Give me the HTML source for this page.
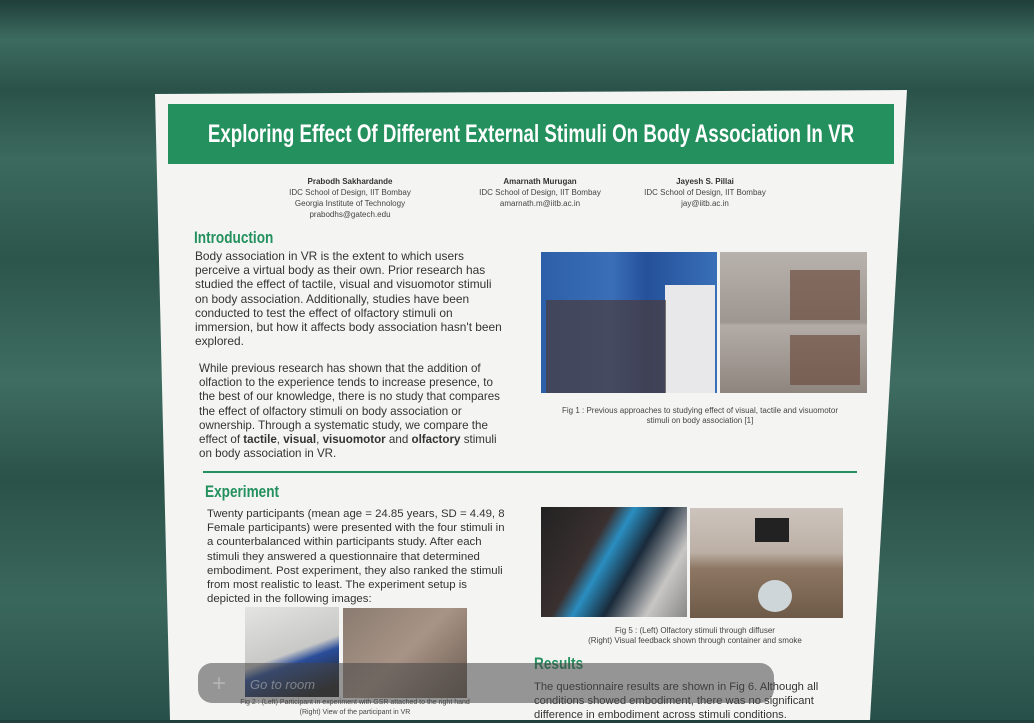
<!DOCTYPE html>
<html><head><style>
*{margin:0;padding:0;box-sizing:border-box}
body{width:1034px;height:720px;overflow:hidden;position:relative;font-family:"Liberation Sans",sans-serif;
background:linear-gradient(180deg,#1f3f3a 0px,#3d6b60 40px,#2a5249 90px,#3c6a5f 160px,#2c554b 260px,#3f6d62 380px,#2b5249 480px,#3a675c 600px,#28504a 720px);}
.poster{position:absolute;left:0;top:0;width:1034px;height:720px;background:#f4f5f3;
clip-path:polygon(155px 94px,907px 90px,870px 720px,170px 720px);}
.abs{position:absolute}
.title{left:168px;top:104px;width:726px;height:60px;background:#23905e;color:#fff;font-weight:bold;font-size:25px;line-height:60px;white-space:nowrap}
.title span{position:absolute;left:50%;top:0;transform:translateX(-50%) scaleX(0.75);transform-origin:center}
.auth{font-size:8px;color:#444;text-align:center;line-height:11px}
.auth b{color:#333}
h2{position:absolute;color:#23905e;font-size:17px;font-weight:bold;transform:scaleX(0.8);transform-origin:left}
.txt{position:absolute;font-size:11.2px;line-height:14.2px;color:#333}
.cap{position:absolute;font-size:8px;color:#444;text-align:center;line-height:10px}
.img{position:absolute}
</style></head><body>
<div class="poster">
<div class="abs title"><span>Exploring Effect Of Different External Stimuli On Body Association In VR</span></div>
<div class="abs auth" style="left:270px;top:176px;width:160px"><b>Prabodh Sakhardande</b><br>IDC School of Design, IIT Bombay<br>Georgia Institute of Technology<br>prabodhs@gatech.edu</div>
<div class="abs auth" style="left:440px;top:176px;width:200px"><b>Amarnath Murugan</b><br>IDC School of Design, IIT Bombay<br>amarnath.m@iitb.ac.in</div>
<div class="abs auth" style="left:625px;top:176px;width:160px"><b>Jayesh S. Pillai</b><br>IDC School of Design, IIT Bombay<br>jay@iitb.ac.in</div>
<h2 style="left:194px;top:228px">Introduction</h2>
<div class="txt" style="left:195px;top:249px;width:310px;font-size:11.9px">Body association in VR is the extent to which users perceive a virtual body as their own. Prior research has studied the effect of tactile, visual and visuomotor stimuli on body association. Additionally, studies have been conducted to test the effect of olfactory stimuli on immersion, but how it affects body association hasn't been explored.</div>
<div class="txt" style="left:199px;top:362px;width:308px;font-size:11.6px">While previous research has shown that the addition of olfaction to the experience tends to increase presence, to the best of our knowledge, there is no study that compares the effect of olfactory stimuli on body association or ownership. Through a systematic study, we compare the effect of <b>tactile</b>, <b>visual</b>, <b>visuomotor</b> and <b>olfactory</b> stimuli on body association in VR.</div>
<div class="img" style="left:541px;top:252px;width:176px;height:141px;background:linear-gradient(90deg,#2c5fa8 0,#3a6fb8 40%,#25509a 60%,#3870b8 100%)"></div>
<div class="img" style="left:665px;top:285px;width:50px;height:108px;background:#e8e8ea"></div>
<div class="img" style="left:546px;top:300px;width:120px;height:93px;background:#4a3a3a;opacity:.7"></div>
<div class="img" style="left:720px;top:252px;width:147px;height:141px;background:linear-gradient(180deg,#b8b2ad,#9e9690 50%,#b3aca6 52%,#8e857e)"></div>
<div class="img" style="left:790px;top:270px;width:70px;height:50px;background:#6e4e42;opacity:.7"></div>
<div class="img" style="left:790px;top:335px;width:70px;height:50px;background:#6e4e42;opacity:.7"></div>
<div class="cap" style="left:550px;top:406px;width:300px">Fig 1 : Previous approaches to studying effect of visual, tactile and visuomotor stimuli on body association [1]</div>
<div class="abs" style="left:203px;top:471px;width:654px;height:2px;background:#23905e"></div>
<h2 style="left:205px;top:482px">Experiment</h2>
<div class="txt" style="left:207px;top:507px;width:300px;font-size:11.4px">Twenty participants (mean age = 24.85 years, SD = 4.49, 8 Female participants)  were presented with the four stimuli in a counterbalanced within participants study. After each stimuli they answered a questionnaire that determined embodiment. Post experiment, they also ranked the stimuli from most realistic to least. The experiment setup is depicted in the following images:</div>
<div class="img" style="left:245px;top:607px;width:94px;height:90px;background:linear-gradient(160deg,#e4e4e2,#c8c8c6 50%,#2a4d9a 60%,#222 90%)"></div>
<div class="img" style="left:343px;top:608px;width:124px;height:90px;background:linear-gradient(135deg,#8a7b70,#a89486 50%,#6a5a50)"></div>
<div class="cap" style="left:220px;top:698px;width:270px;font-size:7px">Fig 2 : (Left) Participant in experiment with GSR attached to the right hand<br>(Right) View of the participant in VR</div>
<div class="img" style="left:541px;top:507px;width:146px;height:110px;background:linear-gradient(120deg,#222 0,#3a3030 35%,#2a8ec0 45%,#1a2a3a 60%,#c8c6c4 80%,#888 100%)"></div>
<div class="img" style="left:690px;top:508px;width:153px;height:110px;background:linear-gradient(180deg,#cdc4bd 0,#bcb0a6 40%,#8d7763 55%,#6e5a48 100%)"></div>
<div class="img" style="left:755px;top:518px;width:34px;height:24px;background:#222"></div>
<div class="img" style="left:758px;top:580px;width:34px;height:32px;border-radius:50%;background:#cfd6da"></div>
<div class="cap" style="left:560px;top:626px;width:270px">Fig 5 : (Left) Olfactory stimuli through diffuser<br>(Right) Visual feedback shown through container and smoke</div>
<h2 style="left:534px;top:654px">Results</h2>
<div class="txt" style="left:534px;top:680px;width:300px">The questionnaire results are shown in Fig 6. Although all conditions showed embodiment, there was no significant difference in embodiment across stimuli conditions.</div>
</div>
<div class="abs" style="left:198px;top:663px;width:576px;height:40px;border-radius:14px;background:rgba(70,70,70,.55)"></div>
<div class="abs" style="left:212px;top:670px;color:rgba(200,200,200,.6);font-size:24px">+</div>
<div class="abs" style="left:250px;top:677px;color:rgba(200,200,200,.5);font-size:13px;font-style:italic">Go to room</div>
</body></html>
